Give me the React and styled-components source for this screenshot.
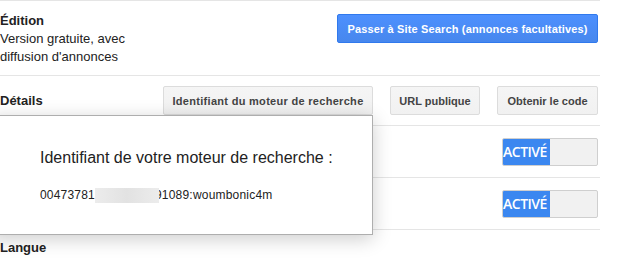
import React from "react";
import styled, { createGlobalStyle } from "styled-components";

const GlobalStyle = createGlobalStyle`
	body {
		margin: 0;
		background: #fff;
		font-family: Arial, "Liberation Sans", sans-serif;
		color: #222;
		overflow: hidden;
	}
`;

const Page = styled.div`
	width: 600px;
	border-top: 1px solid #e5e5e5;
`;

const Row = styled.div`
	display: flex;
	align-items: ${(p) => (p.$top ? "flex-start" : "center")};
	justify-content: space-between;
	height: ${(p) => p.$h}px;
	padding-right: 2px;
	border-bottom: ${(p) => (p.$last ? "none" : "1px solid #e5e5e5")};
	box-sizing: border-box;
	padding-top: ${(p) => p.$pt || 0}px;
	position: relative;
`;

const Label = styled.div`
	font-size: 13px;
	line-height: 18px;
`;

const Title = styled.div`
	font-weight: bold;
`;

const Actions = styled.div`
	display: flex;
	gap: 17px;
`;

const Button = styled.button`
	width: ${(p) => p.$w}px;
	height: 29px;
	padding: 0;
	font-family: Arial, "Liberation Sans", sans-serif;
	font-size: 11px;
	font-weight: bold;
	letter-spacing: ${(p) => p.$ls || 0}px;
	color: ${(p) => (p.$primary ? "#fff" : "#444")};
	background: ${(p) =>
		p.$primary ? "linear-gradient(#4d90fe, #4787ed)" : "linear-gradient(#f5f5f5, #f1f1f1)"};
	border: 1px solid ${(p) => (p.$primary ? "#3079ed" : "#dcdcdc")};
	border-radius: 2px;
	white-space: nowrap;
	text-align: center;
	cursor: pointer;
	margin-top: ${(p) => p.$mt || 0}px;
`;

const Anchor = styled.div`
	position: relative;
	display: flex;
`;

const Popup = styled.div`
	position: absolute;
	top: 100%;
	right: 0;
	width: 384px;
	height: 120px;
	box-sizing: border-box;
	padding: 32px 0 0 50px;
	background: #fff;
	border: 1px solid #aeaeae;
	box-shadow: 0 4px 18px rgba(0, 0, 0, 0.2);
	z-index: 10;
`;

const PopupTitle = styled.div`
	font-size: 16px;
	line-height: 20px;
	color: #222;
`;

const PopupId = styled.div`
	margin-top: 19px;
	font-size: 12px;
	line-height: 16px;
	letter-spacing: 0.2px;
	color: #222;
	display: flex;
	align-items: center;
`;

const Blur = styled.span`
	position: relative;
	z-index: 1;
	display: inline-block;
	width: 64px;
	height: 15px;
	margin-right: -4px;
	background: linear-gradient(90deg, #ececec, #e2e2e2 50%, #ececec);
	filter: blur(0.6px);
`;

const Toggle = styled.div`
	display: flex;
	width: 96px;
	height: 28px;
	box-sizing: border-box;
	border: 1px solid #cfcfcf;
	border-radius: 2px;
	background: #f1f1f1;
	overflow: hidden;
`;

const ToggleOn = styled.div`
	width: 47px;
	background: #3b87f0;
	color: #fff;
	font-family: "Open Sans", sans-serif;
	font-weight: 600;
	font-size: 14px;
	line-height: 26px;
	letter-spacing: -0.5px;
	white-space: nowrap;
	overflow: visible;
`;

export default function App() {
	return (
		<>
			<GlobalStyle />
			<Page>
				<Row $h={75} $top $pt={11}>
					<Label>
						<Title>Édition</Title>
						Version gratuite, avec
						<br />
						diffusion d'annonces
					</Label>
					<Button $primary $mt={2} $w={261} $ls={0.15}>
						Passer à Site Search (annonces facultatives)
					</Button>
				</Row>
				<Row $h={50}>
					<Label>
						<Title>Détails</Title>
					</Label>
					<Actions>
						<Anchor>
							<Button $w={210} $ls={0.3}>
								Identifiant du moteur de recherche
							</Button>
							<Popup>
								<PopupTitle>Identifiant de votre moteur de recherche :</PopupTitle>
								<PopupId>
									00473781
									<Blur />
									91089:woumbonic4m
								</PopupId>
							</Popup>
						</Anchor>
						<Button $w={90}>URL publique</Button>
						<Button $w={101}>Obtenir le code</Button>
					</Actions>
				</Row>
				<Row $h={52}>
					<Label />
					<Toggle>
						<ToggleOn>ACTIVÉ</ToggleOn>
					</Toggle>
				</Row>
				<Row $h={52}>
					<Label />
					<Toggle>
						<ToggleOn>ACTIVÉ</ToggleOn>
					</Toggle>
				</Row>
				<Row $h={40} $top $pt={9} $last>
					<Label>
						<Title>Langue</Title>
					</Label>
				</Row>
			</Page>
		</>
	);
}
